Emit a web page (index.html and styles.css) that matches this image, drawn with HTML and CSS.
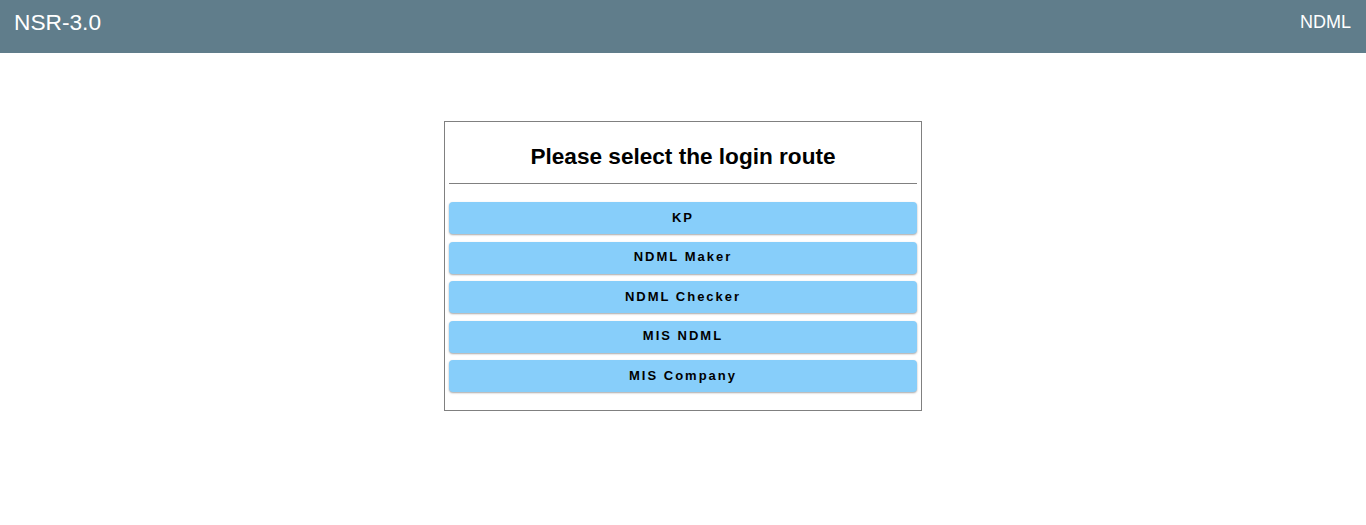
FILE: index.html
```html
<!DOCTYPE html>
<html>
<head>
<meta charset="utf-8">
<link rel="stylesheet" href="styles.css">
</head>
<body>
<header class="topbar">
  <span class="brand">NSR-3.0</span>
  <span class="org">NDML</span>
</header>
<main class="page">
  <section class="card">
    <h2 class="card-title">Please select the login route</h2>
    <hr class="divider">
    <div class="routes">
      <button class="route">KP</button>
      <button class="route">NDML Maker</button>
      <button class="route">NDML Checker</button>
      <button class="route">MIS NDML</button>
      <button class="route">MIS Company</button>
    </div>
  </section>
</main>
</body>
</html>
```
FILE: styles.css
```css
html, body {
  margin: 0;
  padding: 0;
  background: #ffffff;
  font-family: "Liberation Sans", Arial, sans-serif;
}
.topbar {
  height: 53px;
  box-sizing: border-box;
  background: #607d8b;
  color: #ffffff;
  display: flex;
  justify-content: space-between;
  align-items: center;
  padding: 0 15px 10px 14px;
}
.brand {
  font-size: 22.7px;
  line-height: 26px;
}
.org {
  font-size: 18px;
  line-height: 22px;
}
.page {
  display: flex;
  justify-content: center;
  padding-top: 68px;
}
.card {
  width: 478px;
  box-sizing: border-box;
  border: 1px solid #808080;
  padding: 0 4px 18px;
}
.card-title {
  margin: 0;
  padding: 22px 0 14px;
  font-size: 22.6px;
  line-height: 25px;
  font-weight: bold;
  text-align: center;
  color: #000;
}
.divider {
  margin: 0;
  border: 0;
  height: 1px;
  background: #808080;
}
.routes {
  display: flex;
  flex-direction: column;
  gap: 7.5px;
  padding-top: 18px;
}
.route {
  height: 32px;
  border: 0;
  border-radius: 4px;
  background: #87cefa;
  box-shadow: 0 1px 2px rgba(0,0,0,0.35);
  font-family: "Liberation Sans", Arial, sans-serif;
  font-size: 13px;
  font-weight: bold;
  letter-spacing: 2px;
  color: #000;
  padding: 0 0 2px;
  cursor: pointer;
}
```
